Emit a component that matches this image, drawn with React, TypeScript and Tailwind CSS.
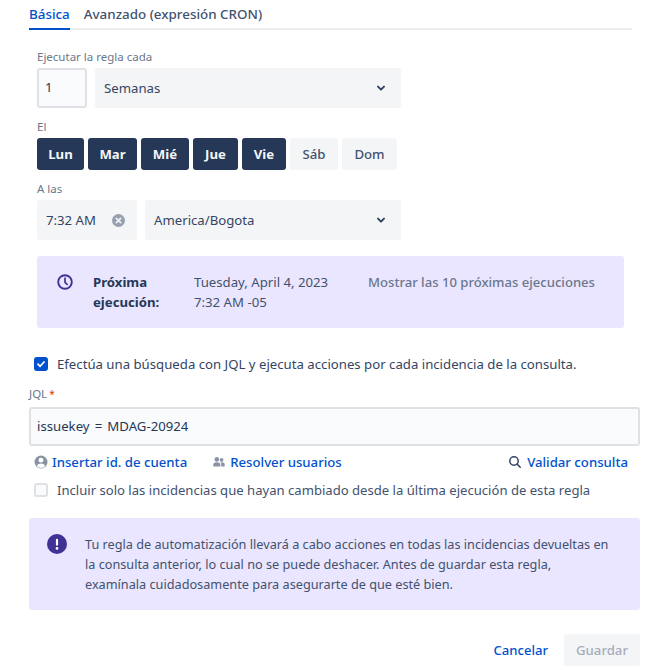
import React from "react";

const Chevron = () => (
  <svg width="16" height="16" viewBox="0 0 24 24" className="text-[#344563]">
    <path d="M7.5 10l4.5 4.5 4.5-4.5" fill="none" stroke="currentColor" strokeWidth="3" strokeLinecap="round" strokeLinejoin="round" />
  </svg>
);

const Check = ({ checked }: { checked: boolean }) =>
  checked ? (
    <span className="flex h-[14px] w-[14px] shrink-0 items-center justify-center rounded-[3px] bg-[#0052cc]">
      <svg width="10" height="10" viewBox="0 0 10 10">
        <path d="M2 5.2l2.1 2.1L8 3" fill="none" stroke="#fff" strokeWidth="1.7" strokeLinecap="round" strokeLinejoin="round" />
      </svg>
    </span>
  ) : (
    <span className="h-[14px] w-[14px] shrink-0 rounded-[3px] border-2 border-[#dfe1e6] bg-[#fafbfc]" />
  );

const days = [
  { t: "Lun", w: "w-[47px]", on: true },
  { t: "Mar", w: "w-[49px]", on: true },
  { t: "Mié", w: "w-[48px]", on: true },
  { t: "Jue", w: "w-[45px]", on: true },
  { t: "Vie", w: "w-[44px]", on: true },
  { t: "Sáb", w: "w-[48px]", on: false },
  { t: "Dom", w: "w-[55px]", on: false },
];

export default function App() {
  return (
    <div className="h-[670px] w-[670px] overflow-hidden bg-white pl-[29px] pr-[30px] font-['Noto_Sans','Open_Sans',sans-serif] text-[13.2px] text-[#344563]">
      <div className="mr-[8px] flex h-[30px] gap-[14px] border-b-2 border-[#ebecf0] text-[13.4px] leading-[28px]">
        <div className="-mb-[2px] h-[30px] border-b-2 border-[#0052cc] font-medium text-[#0052cc]">Básica</div>
        <div className="font-medium text-[#42526e]">Avanzado (expresión CRON)</div>
      </div>

      <div className="ml-[8px] w-[364px]">
        <div className="mt-[18px] h-[18px] text-[11.5px] leading-[18px] text-[#6b778c]">Ejecutar la regla cada</div>
        <div className="mt-[2px] flex gap-[8px]">
          <div className="flex h-[40px] w-[50px] items-center rounded-[3px] border-2 border-[#dfe1e6] bg-[#fafbfc] pl-[6px] text-[#253858]">1</div>
          <div className="flex h-[40px] flex-1 items-center justify-between rounded-[3px] bg-[#f4f5f7] pl-[9px] pr-[12px]">
            <span className="pt-[1px]">Semanas</span>
            <Chevron />
          </div>
        </div>
        <div className="mt-[10px] h-[18px] text-[11.5px] leading-[18px] text-[#6b778c]">El</div>
        <div className="mt-[2px] flex gap-[4px]">
          {days.map((d) => (
            <div
              key={d.t}
              className={`flex h-[32px] items-center justify-center rounded-[3px] pt-[1px] ${d.w} ${d.on ? "bg-[#253858] font-bold text-[#f4f5f7]" : "bg-[#f4f5f7] font-medium text-[#42526e]"}`}
            >
              {d.t}
            </div>
          ))}
        </div>
        <div className="mt-[10px] h-[18px] text-[11.5px] leading-[18px] text-[#6b778c]">A las</div>
        <div className="mt-[2px] flex gap-[8px]">
          <div className="flex h-[40px] w-[100px] items-center justify-between rounded-[3px] bg-[#f4f5f7] pl-[9px] pr-[12px]">
            <span className="pt-[1px]">7:32 AM</span>
            <svg width="13" height="13" viewBox="0 0 12 12">
              <circle cx="6" cy="6" r="6" fill="#97a0af" />
              <path d="M4 4l4 4M8 4l-4 4" stroke="#f4f5f7" strokeWidth="1.5" strokeLinecap="round" />
            </svg>
          </div>
          <div className="flex h-[40px] flex-1 items-center justify-between rounded-[3px] bg-[#f4f5f7] pl-[9px] pr-[12px]">
            <span className="pt-[1px]">America/Bogota</span>
            <Chevron />
          </div>
        </div>
      </div>

      <div className="ml-[8px] mt-[16px] flex h-[72px] w-[587px] rounded-[3px] bg-[#eae6ff] pl-[20px] pt-[16px] leading-[20px]">
        <svg width="16" height="16" viewBox="0 0 16 16" className="mt-[2px] shrink-0">
          <circle cx="8" cy="8" r="6.8" fill="none" stroke="#403294" strokeWidth="1.9" />
          <path d="M8 4.2V8.3l2.1 2" fill="none" stroke="#403294" strokeWidth="1.7" strokeLinecap="round" strokeLinejoin="round" />
        </svg>
        <div className="ml-[20px] w-[101px] font-bold text-[#253858]">Próxima ejecución:</div>
        <div className="w-[174px] text-[#42526e]">
          <div>Tuesday, April 4, 2023</div>
          <div>7:32 AM -05</div>
        </div>
        <div className="text-[13.1px] font-medium text-[#6b778c]">Mostrar las 10 próximas ejecuciones</div>
      </div>

      <div className="ml-[5px] mt-[27px] flex h-[18px] items-center gap-[9px] leading-[18px] text-[#344563]">
        <Check checked />
        <span>Efectúa una búsqueda con JQL y ejecuta acciones por cada incidencia de la consulta.</span>
      </div>

      <div className="mt-[13px] h-[16px] text-[11.5px] leading-[16px] text-[#6b778c]">
        JQL<span className="ml-[2px] text-[10px] text-[#de350b]">*</span>
      </div>
      <div className="mt-[5px] flex h-[39px] items-center rounded-[3px] border-2 border-[#dfe1e6] bg-[#fafbfc] pl-[6px] pt-[1px] text-[#253858] [word-spacing:1.7px]">
        issuekey = MDAG-20924
      </div>

      <div className="ml-[5px] mt-[7px] flex h-[18px] items-center font-medium leading-[18px] text-[#0052cc]">
        <svg width="14" height="14" viewBox="0 0 14 14" className="mr-[4px]">
          <circle cx="7" cy="7" r="6.5" fill="#8993a4" />
          <circle cx="7" cy="5.2" r="2.4" fill="#fff" />
          <path d="M2.9 11.3C3.6 9.3 5 8.6 7 8.6s3.4.7 4.1 2.7A6 6 0 0 1 2.9 11.3z" fill="#fff" />
        </svg>
        <span>Insertar id. de cuenta</span>
        <svg width="14" height="14" viewBox="0 0 16 14" className="ml-[25px] mr-[4px]">
          <circle cx="5.5" cy="4" r="2.6" fill="#8993a4" />
          <circle cx="11" cy="4.6" r="2.1" fill="#8993a4" />
          <path d="M1.5 12V9.8C1.5 8.3 3 7.2 5.5 7.2s4 1.1 4 2.6V12z" fill="#8993a4" />
          <path d="M10.5 12V9.5c0-.9-.3-1.6-.8-2.1.4-.1.9-.2 1.3-.2 2 0 3.5.9 3.5 2.3V12z" fill="#8993a4" />
        </svg>
        <span>Resolver usuarios</span>
        <svg width="14" height="14" viewBox="0 0 14 14" className="ml-auto mr-[5px]">
          <circle cx="6" cy="6" r="4.2" fill="none" stroke="#344563" strokeWidth="1.5" />
          <path d="M9.2 9.2l3 3" stroke="#344563" strokeWidth="1.6" strokeLinecap="round" />
        </svg>
        <span className="mr-[12px]">Validar consulta</span>
      </div>

      <div className="ml-[5px] mt-[10px] flex h-[18px] items-center gap-[9px] text-[13.1px] leading-[18px] text-[#42526e]">
        <Check checked={false} />
        <span>Incluir solo las incidencias que hayan cambiado desde la última ejecución de esta regla</span>
      </div>

      <div className="mt-[19px] flex h-[92px] rounded-[3px] bg-[#eae6ff] pl-[18px] pt-[16px] leading-[20px]">
        <svg width="20" height="20" viewBox="0 0 20 20" className="shrink-0">
          <circle cx="10" cy="10" r="10" fill="#403294" />
          <rect x="8.9" y="4.8" width="2.2" height="7" rx="1.1" fill="#fff" />
          <circle cx="10" cy="14.4" r="1.3" fill="#fff" />
        </svg>
        <p className="ml-[18px] w-[530px] text-[12.7px] text-[#42526e]">
          Tu regla de automatización llevará a cabo acciones en todas las incidencias devueltas en la consulta anterior, lo cual no se puede deshacer. Antes de guardar esta regla, examínala cuidadosamente para asegurarte de que esté bien.
        </p>
      </div>

      <div className="mt-[24px] flex items-center justify-end gap-[16px] font-medium">
        <span className="pt-[1px] text-[13.1px] text-[#0052cc]">Cancelar</span>
        <div className="flex h-[32px] w-[76px] items-center justify-center rounded-[3px] bg-[#f4f5f7] pt-[1px] text-[#a5adba]">Guardar</div>
      </div>
    </div>
  );
}
